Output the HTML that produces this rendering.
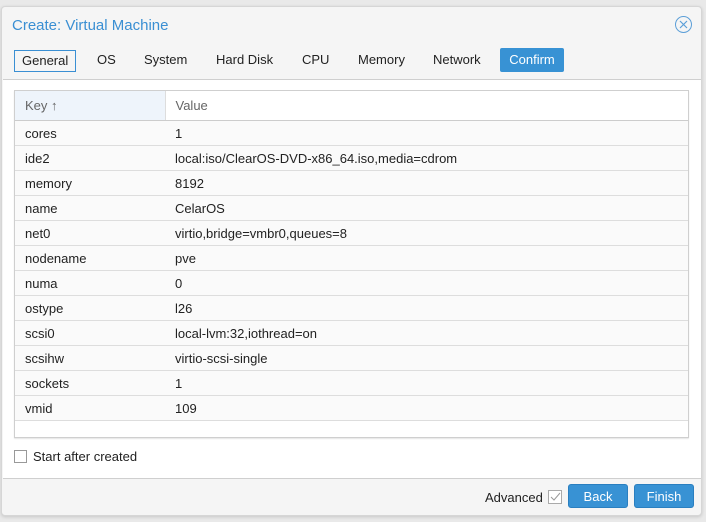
<!DOCTYPE html>
<html><head><style>
*{box-sizing:border-box}
body{margin:0;width:706px;height:522px;background:#e9e9e9;font-family:"Liberation Sans",sans-serif;font-size:13px;color:#222;position:relative;overflow:hidden}
.dlg{position:absolute;left:1px;top:6px;width:701px;height:510px;background:#f5f5f5;border:1px solid #d6d6d6;border-radius:4px;box-shadow:0 1px 3px rgba(0,0,0,.15)}
.title{position:absolute;left:10px;top:10px;font-size:15px;color:#3a8fd3}
.close{position:absolute;left:673px;top:9px;width:17px;height:17px;border:1px solid #5c9fd8;border-radius:50%}
.tab{position:absolute;top:42px;height:22px;line-height:22px;font-size:13px;color:#222}
.body{position:absolute;left:1px;top:72px;width:698px;height:400px;background:#fff;border-top:1px solid #cfcfcf;border-bottom:1px solid #cfcfcf}
.grid{position:absolute;left:11px;top:10px;width:675px;height:348px;border:1px solid #cfcfcf;box-shadow:0 1px 1px rgba(0,0,0,.1)}
table{width:100%;border-collapse:collapse}
td{height:25px;border-bottom:1px solid #ddd;background:#fafafa;padding:1px 10px 0;font-size:13px}
td.k{width:150px}
th{height:29px;text-align:left;font-weight:normal;color:#666;padding:0 10px;border-bottom:1px solid #ccc;background:#fff}
th.k{background:#eef4fb;border-right:1px solid #ddd}
.btn{position:absolute;top:477px;width:60px;height:24px;background:#3892d4;border:1px solid #2a7fc0;border-radius:3px;color:#fff;text-align:center;line-height:24px;font-size:13px}
</style></head><body>
<div class="dlg">
<div class="title">Create: Virtual Machine</div>
<div class="close"><svg width="15" height="15"><path d="M4 4L11 11M11 4L4 11" stroke="#5c9fd8" stroke-width="1.2"/></svg></div>
<div class="tab" style="left:12px;border:1px solid #3a8fd3;padding:0 7px;height:22px;line-height:20px;top:43px">General</div>
<div class="tab" style="left:95px">OS</div>
<div class="tab" style="left:142px">System</div>
<div class="tab" style="left:214px">Hard Disk</div>
<div class="tab" style="left:300px">CPU</div>
<div class="tab" style="left:356px">Memory</div>
<div class="tab" style="left:431px">Network</div>
<div class="tab" style="left:498px;width:64px;text-align:center;background:#3892d4;color:#fff;border-radius:2px;top:41px;height:24px;line-height:24px">Confirm</div>
<div class="body">
<div class="grid">
<table>
<tr><th class="k">Key ↑</th><th>Value</th></tr>
<tr><td class="k">cores</td><td>1</td></tr>
<tr><td class="k">ide2</td><td>local:iso/ClearOS-DVD-x86_64.iso,media=cdrom</td></tr>
<tr><td class="k">memory</td><td>8192</td></tr>
<tr><td class="k">name</td><td>CelarOS</td></tr>
<tr><td class="k">net0</td><td>virtio,bridge=vmbr0,queues=8</td></tr>
<tr><td class="k">nodename</td><td>pve</td></tr>
<tr><td class="k">numa</td><td>0</td></tr>
<tr><td class="k">ostype</td><td>l26</td></tr>
<tr><td class="k">scsi0</td><td>local-lvm:32,iothread=on</td></tr>
<tr><td class="k">scsihw</td><td>virtio-scsi-single</td></tr>
<tr><td class="k">sockets</td><td>1</td></tr>
<tr><td class="k">vmid</td><td>109</td></tr>
</table>
</div>
<div style="position:absolute;left:11px;top:370px;width:13px;height:13px;border:1px solid #999;background:#fff"></div>
<div style="position:absolute;left:30px;top:369px">Start after created</div>
</div>
<div style="position:absolute;left:483px;top:483px">Advanced</div>
<div style="position:absolute;left:546px;top:483px;width:14px;height:14px;border:1px solid #aaa;background:#fff"><svg width="12" height="12"><path d="M2 6L5 9L11 2" stroke="#999" fill="none"/></svg></div>
<div class="btn" style="left:566px">Back</div>
<div class="btn" style="left:632px">Finish</div>
</div>
</body></html>
